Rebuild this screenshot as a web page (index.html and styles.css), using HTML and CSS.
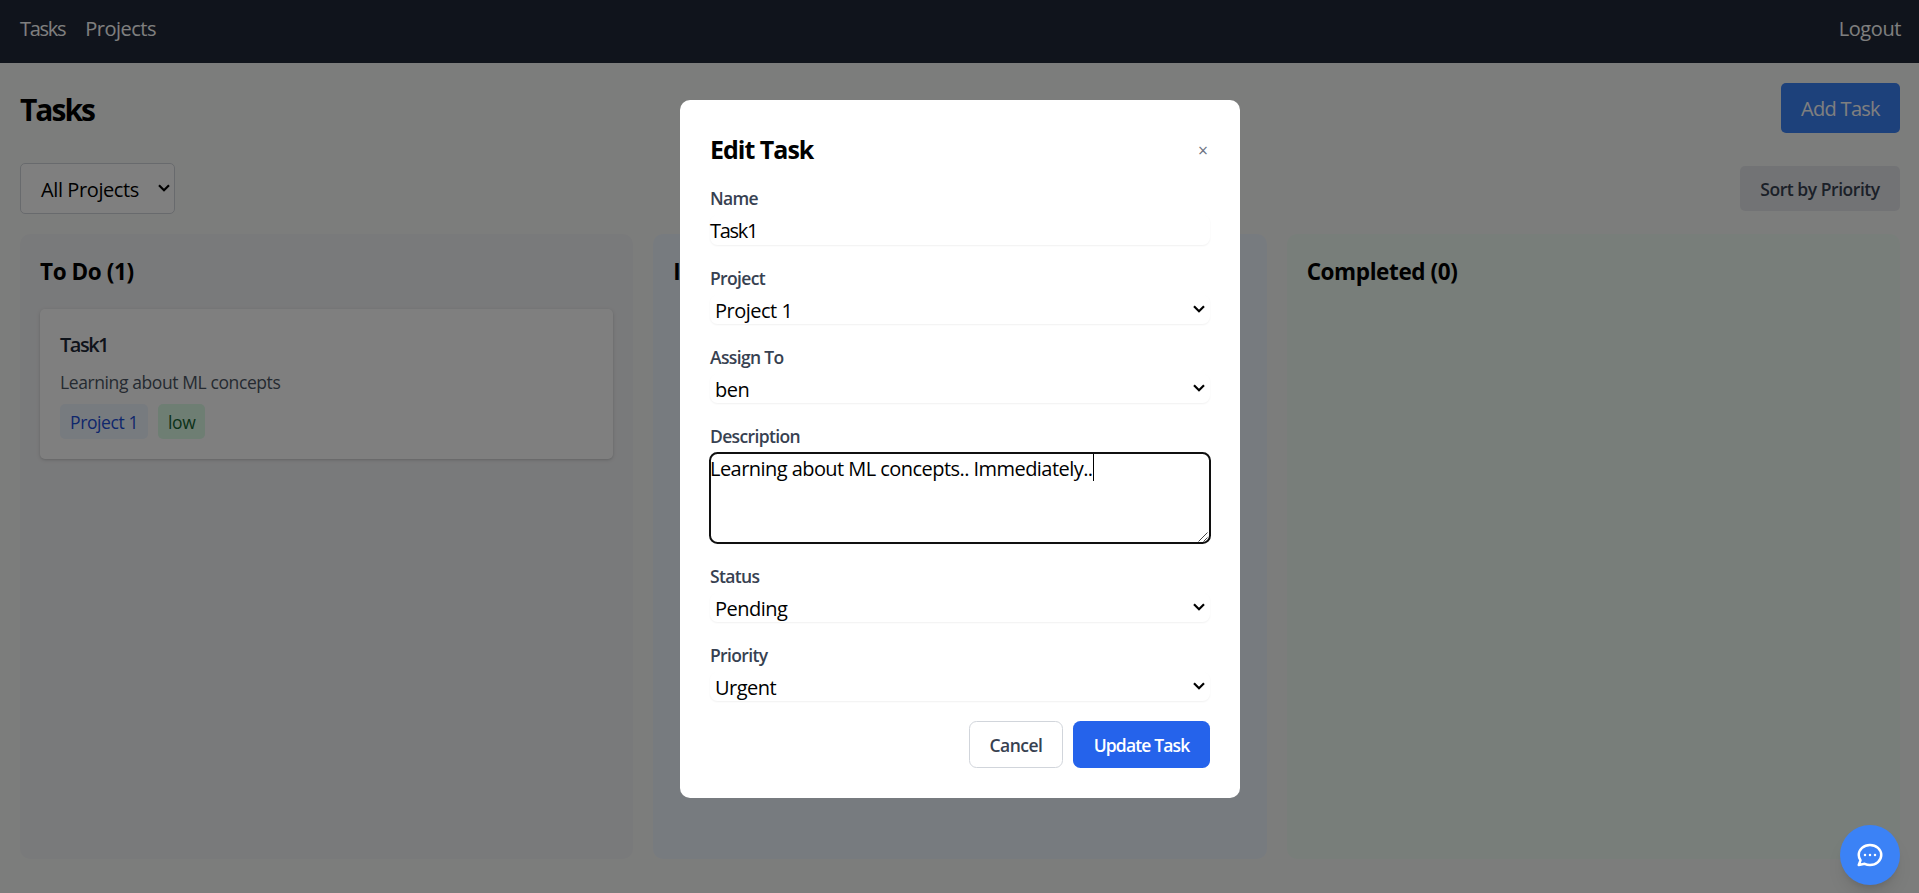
FILE: index.html
```html
<!DOCTYPE html>
<html lang="en">
<head>
<meta charset="utf-8">
<title>Tasks</title>
<link rel="stylesheet" href="styles.css">
</head>
<body>
<nav class="navbar">
  <div class="nav-links"><a class="tight">Tasks</a><a>Projects</a></div>
  <a class="logout">Logout</a>
</nav>
<main class="page">
  <header class="page-header">
    <h1 class="page-title">Tasks</h1>
    <button class="btn-add">Add Task</button>
  </header>
  <div class="toolbar">
    <div class="filter"><span>All Projects</span>
      <svg class="chevron" viewBox="0 0 12 8"><path d="M1 1.2l5 5 5-5"/></svg>
    </div>
    <button class="btn-sort">Sort by Priority</button>
  </div>
  <section class="board">
    <div class="column column-todo">
      <h2 class="column-title">To Do (1)</h2>
      <article class="card">
        <h3 class="card-title">Task1</h3>
        <p class="card-text">Learning about ML concepts</p>
        <div class="tags"><span class="tag tag-project">Project 1</span><span class="tag tag-low">low</span></div>
      </article>
    </div>
    <div class="column column-progress"><h2 class="column-title">In Progress (0)</h2></div>
    <div class="column column-done"><h2 class="column-title">Completed (0)</h2></div>
  </section>
</main>
<div class="overlay">
  <div class="modal">
    <div class="modal-header"><h2 class="modal-title">Edit Task</h2><button class="close">×</button></div>
    <div class="field"><span class="label">Name</span><div class="control control-input tight">Task1</div></div>
    <div class="field"><span class="label">Project</span><div class="control control-select"><span>Project 1</span><svg class="chevron" viewBox="0 0 12 8"><path d="M1 1.2l5 5 5-5"/></svg></div></div>
    <div class="field"><span class="label">Assign To</span><div class="control control-select"><span>ben</span><svg class="chevron" viewBox="0 0 12 8"><path d="M1 1.2l5 5 5-5"/></svg></div></div>
    <div class="field"><span class="label">Description</span><div class="control control-area"><span class="area-text">Learning about ML concepts.. Immediately..</span><span class="caret"></span><svg class="resizer" viewBox="0 0 10 10"><path d="M0.5 9.5l9-9M5.5 9.5l4-4"/></svg></div></div>
    <div class="field"><span class="label">Status</span><div class="control control-select"><span>Pending</span><svg class="chevron" viewBox="0 0 12 8"><path d="M1 1.2l5 5 5-5"/></svg></div></div>
    <div class="field"><span class="label">Priority</span><div class="control control-select"><span>Urgent</span><svg class="chevron" viewBox="0 0 12 8"><path d="M1 1.2l5 5 5-5"/></svg></div></div>
    <div class="actions"><button class="btn-cancel">Cancel</button><button class="btn-update">Update Task</button></div>
  </div>
</div>
<button class="chat" aria-label="Chat">
  <svg viewBox="0 0 24 24"><path d="M8 12h.01M12 12h.01M16 12h.01M21 12c0 4.418-4.03 8-9 8a9.863 9.863 0 01-4.255-.949L3 20l1.395-3.72C3.512 15.042 3 13.574 3 12c0-4.418 4.03-8 9-8s9 3.582 9 8z"/></svg>
</button>
</body>
</html>
```
FILE: styles.css
```css
* { box-sizing: border-box; margin: 0; }
body {
  height: 893px;
  overflow: hidden;
  background: #f9fbf9;
  color: #000;
  font: 20px/30px "Segoe UI", "Open Sans", "Noto Sans", sans-serif;
  letter-spacing: -0.5px;
}
button { font: inherit; letter-spacing: inherit; border: 0; padding: 0; white-space: nowrap; }
.tight { letter-spacing: -1.3px; }

.navbar {
  display: flex;
  justify-content: space-between;
  height: 63px;
  padding: 14px 18px 0 20px;
  background: #202938;
  color: #fff;
}
.nav-links { display: flex; gap: 20px; }
.logout { letter-spacing: -0.4px; }

.page { padding: 20px 19px 20px 20px; }
.page-header { display: flex; justify-content: space-between; height: 50px; margin-bottom: 30px; }
.page-title { font-size: 30px; line-height: 54px; font-weight: 700; letter-spacing: -2px; }
.btn-add { width: 119px; height: 50px; padding-top: 1px; border-radius: 5px; background: #3b82f6; color: #fff; letter-spacing: -0.7px; }
.toolbar { display: flex; align-items: center; justify-content: space-between; height: 51px; margin-bottom: 20px; }
.filter {
  display: flex;
  align-items: center;
  justify-content: space-between;
  width: 155px;
  height: 51px;
  padding: 3px 4px 0 20px;
  border: 1px solid #d1d5db;
  border-radius: 5px;
  background: #fff;
  letter-spacing: -0.4px;
}
.chevron { width: 12px; height: 8px; fill: none; stroke: #000; stroke-width: 2.2; margin-top: -4px; }
.btn-sort { width: 160px; height: 45px; padding-top: 1px; border-radius: 5px; background: #e5e7eb; color: #374151; font-size: 17.5px; font-weight: 600; letter-spacing: -0.45px; }

.board { display: grid; grid-template-columns: repeat(3, 1fr); gap: 20px; height: 625px; }
.column { padding: 20px; border-radius: 10px; }
.column-todo { background: #f3f4f6; }
.column-progress { background: #eff6ff; }
.column-done { background: #f0fdf4; }
.column-title { font-size: 22.5px; line-height: 35px; font-weight: 700; letter-spacing: -0.4px; margin-bottom: 20px; }
.card { height: 150px; padding: 21px 20px 0; border-radius: 5px; background: #fff; box-shadow: 0 1px 4px rgba(0, 0, 0, 0.12), 0 1px 2px rgba(0, 0, 0, 0.08); }
.card-title { font-size: 20px; line-height: 30px; font-weight: 600; letter-spacing: -1.5px; color: #1f2937; margin-bottom: 10px; }
.card-text { font-size: 17.5px; line-height: 25px; color: #4b5563; margin-bottom: 9px; letter-spacing: -0.4px; }
.tags { display: flex; gap: 10px; font-size: 17.5px; line-height: 25px; letter-spacing: -0.4px; }
.tag { padding: 6px 10px 4px; border-radius: 5px; }
.tag-project { background: #eff6ff; color: #1d4ed8; }
.tag-low { background: #dcfce7; color: #166534; }

.overlay {
  position: fixed;
  inset: 0;
  display: flex;
  justify-content: center;
  align-items: flex-start;
  padding: 100px 0 0 1px;
  background: rgba(0, 0, 0, 0.5);
}
.modal { width: 560px; height: 698px; padding: 30px; border-radius: 10px; background: #fff; }
.modal-header { display: flex; justify-content: space-between; align-items: center; height: 37px; padding-top: 2px; margin-bottom: 19px; }
.modal-title { font-size: 25px; line-height: 35px; font-weight: 700; letter-spacing: -1px; }
.close { width: 14px; background: none; color: #6b7280; font-size: 17.5px; letter-spacing: 0; }
.field { margin-bottom: 20px; }
.label { display: block; margin-bottom: 4px; color: #374151; font-size: 17.5px; line-height: 25px; font-weight: 600; letter-spacing: -0.65px; }
.field + .field { margin-top: -19px; padding-top: 20px; }
.control { border-radius: 7.5px; box-shadow: 0 1px 2px rgba(0, 0, 0, 0.06); }
.control-input { height: 30px; line-height: 32px; }
.control-select { display: flex; justify-content: space-between; align-items: center; height: 29px; padding: 2px 5px 0; line-height: 29px; }
.control-area { position: relative; display: flex; height: 90px; line-height: 32px; outline: 2px solid #101010; outline-offset: -1px; letter-spacing: -0.55px; }
.caret { width: 1px; height: 28px; background: #000; }
.resizer { position: absolute; right: 2px; bottom: 1px; width: 10px; height: 10px; fill: none; stroke: #444; stroke-width: 1; }
.actions { display: flex; justify-content: flex-end; gap: 10px; font-size: 17.5px; font-weight: 600; letter-spacing: -0.85px; }
.btn-cancel { width: 94px; height: 47px; border: 1px solid #d1d5db; border-radius: 7.5px; background: #fff; color: #374151; letter-spacing: -0.5px; }
.btn-update { width: 137px; height: 47px; border-radius: 7.5px; background: #2563eb; color: #fff; }

.chat {
  position: fixed;
  right: 19px;
  bottom: 8px;
  display: grid;
  place-items: center;
  width: 60px;
  height: 60px;
  border-radius: 50%;
  background: #3b82f6;
  box-shadow: 0 12px 18px -4px rgba(0, 0, 0, 0.1), 0 5px 7px -3px rgba(0, 0, 0, 0.1);
}
.chat svg { width: 30px; height: 30px; fill: none; stroke: #fff; stroke-width: 2; stroke-linecap: round; stroke-linejoin: round; }
```
